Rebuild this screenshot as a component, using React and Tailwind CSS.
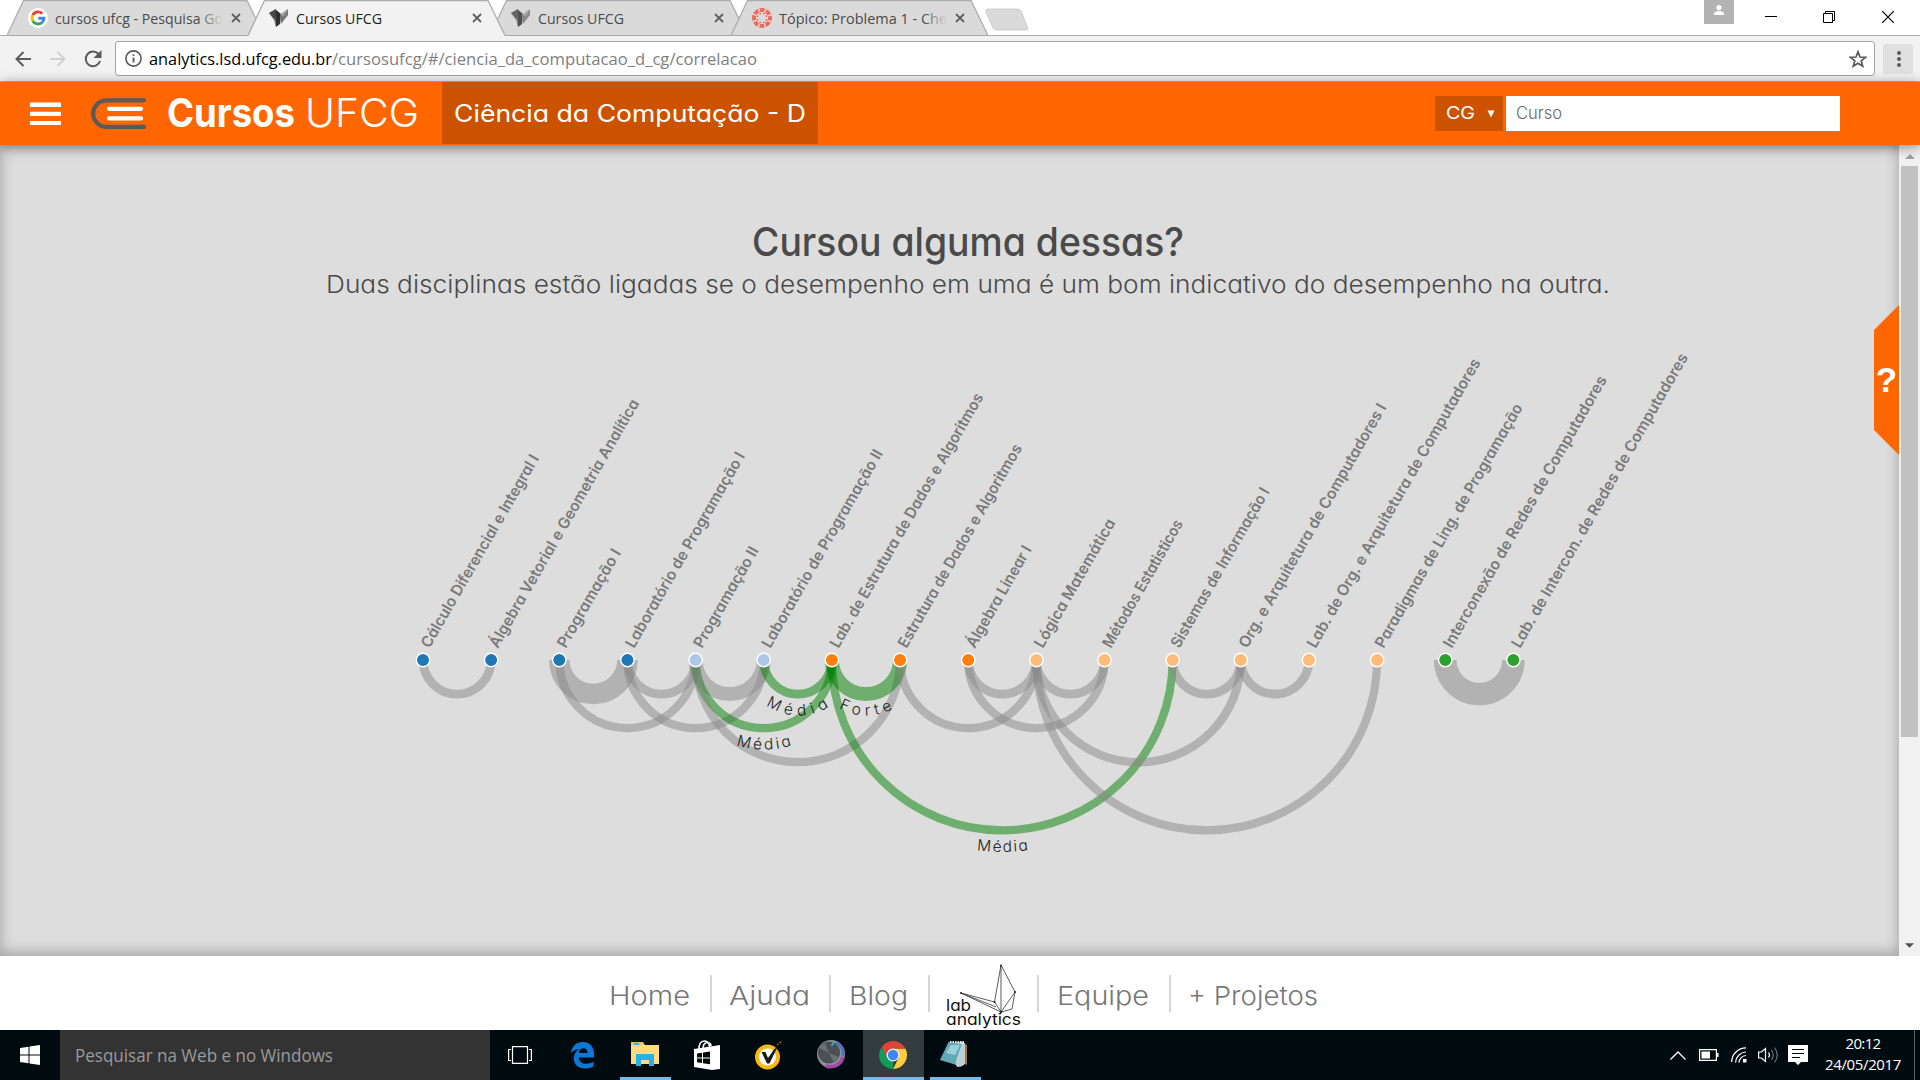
import React, { useLayoutEffect, useRef } from "react";

/* Text whose tracking is adjusted so that it fills the given width. */
function Fit({ w, className = "", children }) {
  const ref = useRef(null);
  useLayoutEffect(() => {
    const el = ref.current;
    el.style.letterSpacing = "0px";
    const natural = el.getBoundingClientRect().width;
    const n = el.textContent.length;
    el.style.letterSpacing = (w - natural) / n + "px";
  }, [w]);
  return (
    <span ref={ref} className={"inline-block shrink-0 whitespace-nowrap " + className}>
      {children}
    </span>
  );
}

/* Text whose glyphs are widened or narrowed to fill the given width. */
function Stretch({ w, className = "", children }) {
  const ref = useRef(null);
  useLayoutEffect(() => {
    const el = ref.current;
    el.style.transform = "none";
    el.style.transform = `scaleX(${w / el.getBoundingClientRect().width})`;
  }, [w]);
  return (
    <span className={"inline-block shrink-0 " + className} style={{ width: w }}>
      <span ref={ref} className="inline-block origin-left whitespace-nowrap">
        {children}
      </span>
    </span>
  );
}

const GOTHIC = "font-['Inter'] [font-feature-settings:'cv11','ss03']";

function Bird() {
  return (
    <svg width="20" height="20" viewBox="0 0 20 20" className="shrink-0">
      <path d="M0 5 7 1 8 13 7 19 5 12Z" fill="#8a8a8a" />
      <path d="M6 1 12 6 11 16 7 19Z" fill="#2e2e2e" />
      <path d="M0 5 7 1 6 12Z" fill="#4a4a4a" />
      <path d="M11 7 19 1 19 7 12 16Z" fill="#777" />
      <path d="M11 7 19 1 15 8Z" fill="#a2a2a2" />
    </svg>
  );
}

function GoogleIcon() {
  return (
    <svg width="20" height="20" viewBox="0 0 20 20" className="shrink-0">
      <circle cx="10" cy="10" r="10" fill="#fff" />
      <g fill="none" strokeWidth="2.9">
        <path d="M14.3 5.7A6 6 0 0 0 4.7 7.2" stroke="#ea4335" />
        <path d="M4.7 7.2A6 6 0 0 0 4.7 12.8" stroke="#fbbc05" />
        <path d="M4.7 12.8A6 6 0 0 0 13.9 14.6" stroke="#34a853" />
        <path d="M13.9 14.6A6 6 0 0 0 16 10.3H10.3" stroke="#4285f4" />
      </g>
    </svg>
  );
}

function CanvasIcon() {
  return (
    <svg width="20" height="20" viewBox="0 0 20 20" className="shrink-0">
      <circle cx="10" cy="10" r="8" fill="none" stroke="#ef6a5e" strokeWidth="4" strokeDasharray="4.8 1.483" strokeDashoffset="2.4" />
      {[0, 45, 90, 135, 180, 225, 270, 315].map((a) => (
        <circle key={a} cx="10" cy="5.2" r="0.9" fill="#ef6a5e" transform={`rotate(${a + 22.5} 10 10)`} />
      ))}
    </svg>
  );
}

function Tab({ active, icon, title, w, fade }) {
  return (
    <div className={"relative -mr-[15.600px] flex h-[36px] w-[257px] shrink-0 items-center " + (active ? "z-10" : "")}>
      <svg className="absolute inset-0" width="257" height="36" viewBox="0 0 257 36">
        <path d="M0 36 16.5.5H240L257 36Z" fill={active ? "#f2f2f2" : "#dadada"} />
        <path d="M0 35.5 16.5.5H240L257 35.5" fill="none" stroke="#adadad" strokeWidth="1.3" />
        {!active && <path d="M0 35.5H257" stroke="#a6a6a6" />}
      </svg>
      <div className="relative flex w-full items-center">
        <div className="ml-[21px]">{icon}</div>
        <div className={"relative ml-[7px] w-[172px] overflow-hidden font-['Open_Sans'] text-[15px] leading-[20px] " + (active ? "text-[#1c1c1c]" : "text-[#4a4a4a]")}>
          <Stretch w={w}>{title}</Stretch>
          {fade && <span className="absolute top-0 right-[4px] h-full w-[24px] bg-linear-to-r from-transparent to-[#dadada]" />}
        </div>
        <svg width="10" height="10" viewBox="0 0 10 10" className="ml-[4px]">
          <path d="M1 1 9 9M9 1 1 9" stroke="#5f5f5f" strokeWidth="1.8" />
        </svg>
      </div>
    </div>
  );
}

function TabStrip() {
  return (
    <div className="flex h-[36px] items-start border-b border-[#adadad] bg-white">
      <div className="flex pl-[7px]">
        <Tab icon={<GoogleIcon />} title="cursos ufcg - Pesquisa Go" w={168} fade />
        <Tab active icon={<Bird />} title="Cursos UFCG" w={86} />
        <Tab icon={<span className="opacity-80"><Bird /></span>} title="Cursos UFCG" w={86} />
        <Tab icon={<CanvasIcon />} title="Tópico: Problema 1 - Che" w={168} fade />
      </div>
      <svg width="44" height="24" viewBox="0 0 44 24" className="mt-[8px] ml-[12px]">
        <path d="M3 1H32Q35 1 36 3L42.5 19Q43.5 22 41 22H12Q9 22 8 20L1 4Q0 1 3 1Z" fill="#dadada" stroke="#c6c6c6" strokeWidth=".8" />
      </svg>
      <div className="ml-auto flex items-start">
        <div className="flex h-[24px] w-[30px] justify-center bg-[#b3b3b3] pt-[5px]">
          <svg width="10" height="10" viewBox="0 0 10 10"><circle cx="5" cy="2.6" r="2.6" fill="#fff" /><path d="M0 10V8.5Q1 6 5 6T10 8.5V10Z" fill="#fff" /></svg>
        </div>
        <svg width="12" height="12" viewBox="0 0 12 12" className="mt-[11px] ml-[31px]"><path d="M0 5.5H12" stroke="#000" /></svg>
        <svg width="12" height="12" viewBox="0 0 12 12" className="mt-[11px] ml-[46px]" fill="none" stroke="#000"><path d="M.5 2.5H9.5V11.5H.5ZM2.5 2.5V.5H11.5V9.5H9.5" /></svg>
        <svg width="12" height="12" viewBox="0 0 12 12" className="mt-[11px] mr-[26px] ml-[47px]"><path d="M0 0 12 12M12 0 0 12" stroke="#000" strokeWidth="1.2" /></svg>
      </div>
    </div>
  );
}

function Toolbar() {
  return (
    <div className="flex h-[46px] items-center border-b border-[#b5b5b5] bg-[#f2f2f2]">
      <svg width="16" height="16" viewBox="0 0 16 16" className="ml-[15px]" fill="none" stroke="#5a5a5a" strokeWidth="2"><path d="M16 8H1.5M8.5 1 1.5 8l7 7" /></svg>
      <svg width="16" height="16" viewBox="0 0 16 16" className="ml-[19px]" fill="none" stroke="#d0d0d0" strokeWidth="2"><path d="M0 8H14.5M7.5 1l7 7-7 7" /></svg>
      <svg width="18" height="18" viewBox="0 0 18 18" className="ml-[18px]"><path d="M14.5 4A7.3 7.3 0 1 0 16 11" fill="none" stroke="#5a5a5a" strokeWidth="2" /><path d="M17.5 0V8H9.5Z" fill="#5a5a5a" /></svg>
      <div className="ml-[13px] flex h-[35px] w-[1760px] items-center rounded-[3px] border border-[#a6a6a6] bg-white pl-[9px]">
        <svg width="17" height="17" viewBox="0 0 17 17"><circle cx="8.5" cy="8.5" r="7.6" fill="none" stroke="#5a5a5a" strokeWidth="1.6" /><path d="M8.5 7.5V12.5M8.5 4.3V6" stroke="#5a5a5a" strokeWidth="1.8" /></svg>
        <div className="ml-[7px] flex font-['Open_Sans'] text-[17px] leading-[24px]">
          <Stretch w={183} className="text-black">analytics.lsd.ufcg.edu.br</Stretch>
          <Stretch w={425} className="text-[#808080]">/cursosufcg/#/ciencia_da_computacao_d_cg/correlacao</Stretch>
        </div>
        <svg width="18" height="18" viewBox="0 0 18 18" className="mr-[7px] ml-auto"><path d="M9 1.8 11 7l5.5.3-4.3 3.5 1.5 5.4L9 13.2l-4.7 3 1.5-5.4L1.5 7.3 7 7Z" fill="none" stroke="#5a5a5a" strokeWidth="1.7" /></svg>
      </div>
      <div className="ml-[8px] flex h-[30px] w-[30px] items-center justify-center rounded-[2px] bg-[#e0e0e0]">
        <svg width="4" height="18" viewBox="0 0 4 18" className="ml-[2px]" fill="#5a5a5a"><circle cx="2" cy="3" r="2" /><circle cx="2" cy="9" r="2" /><circle cx="2" cy="15" r="2" /></svg>
      </div>
    </div>
  );
}

function Header() {
  return (
    <header className={"relative z-20 flex h-[63px] bg-[#ff6600] text-white shadow-[0_2px_12px_rgba(0,0,0,0.45)] " + GOTHIC}>
      <svg width="31" height="23" viewBox="0 0 31 23" className="mt-[20px] ml-[30px]" fill="#fff"><path d="M0 .5H31V5H0ZM0 9.7H31V14H0ZM0 19H31V23H0Z" /></svg>
      <svg width="56" height="32" viewBox="0 0 56 32" className="mt-[16px] ml-[30px]" fill="none" strokeLinecap="round" strokeWidth="4.2">
        <path d="M53 2.3H15.5a13.3 13.3 0 0 0 0 26.6H53" stroke="#5a5a5a" />
        <path d="M18 10.8H50M18 20.4H50" stroke="#fff" />
      </svg>
      <div className="ml-[20px] flex h-[61px] w-[255px] items-center text-[40px] leading-none">
        <Stretch w={128} className="font-bold">Cursos</Stretch>
        <Stretch w={114} className="ml-[10px] font-light">UFCG</Stretch>
      </div>
      <div className="ml-[20px] flex h-[62px] w-[376px] items-center bg-[#cc5200] pt-[2px] pl-[12px] text-[24px]">
        <Stretch w={352}>Ciência da Computação - D</Stretch>
      </div>
      <div className="mt-[14px] ml-auto flex h-[35px] w-[68px] items-center bg-[#cc5200] pl-[11px] text-[17px]">
        <Stretch w={29}>CG</Stretch>
        <svg width="8" height="8" viewBox="0 0 8 8" className="ml-[12px]"><path d="M.5.5H7.5L4 7.5Z" fill="#fff" /></svg>
      </div>
      <div className="mt-[14px] mr-[80px] ml-[3px] flex h-[35px] w-[334px] items-center bg-white pl-[10px] text-[17px] font-light text-[#666]">
        <Stretch w={46}>Curso</Stretch>
      </div>
    </header>
  );
}

const NODES = [
  ["Cálculo Diferencial e Integral I", "#1f77b4", 220],
  ["Álgebra Vetorial e Geometria Analítica", "#1f77b4", 284],
  ["Programação I", "#1f77b4", 111],
  ["Laboratório de Programação I", "#1f77b4", 223],
  ["Programação II", "#aec7e8", 114],
  ["Laboratório de Programação II", "#aec7e8", 226],
  ["Lab. de Estrutura de Dados e Algoritmos", "#ff7f0e", 291],
  ["Estrutura de Dados e Algoritmos", "#ff7f0e", 232],
  ["Álgebra Linear I", "#ff7f0e", 115],
  ["Lógica Matemática", "#ffbb78", 146],
  ["Métodos Estatisticos", "#ffbb78", 145],
  ["Sistemas de Informação I", "#ffbb78", 182],
  ["Org. e Arquitetura de Computadores I", "#ffbb78", 279],
  ["Lab. de Org. e Arquitetura de Computadores", "#ffbb78", 331],
  ["Paradigmas de Ling. de Programação", "#ffbb78", 279],
  ["Interconexão de Redes de Computadores", "#2ca02c", 311],
  ["Lab. de Intercon. de Redes de Computadores", "#2ca02c", 337],
];

const LINKS = [
  [0, 1, 8.8], [2, 3, 20.5], [2, 4, 8.4], [3, 4, 8.8], [3, 5, 8.4], [4, 5, 14],
  [4, 6, 8.4, "Média", 2.8], [4, 7, 8.2], [5, 6, 8.8, "Média", 5.4], [6, 7, 14, "Forte", 4.8],
  [6, 11, 8.2, "Média", 1.6], [7, 9, 8.4], [8, 9, 8.8], [8, 10, 8.4], [9, 10, 8.8],
  [9, 12, 8.4], [9, 14, 8.2], [11, 12, 8.8], [12, 13, 8.8], [15, 16, 22.5],
];

const nodeX = (i) => 423 + 68.15 * i;
const BASE = 335;

function ArcDiagram() {
  return (
    <svg width="1899" height="560" viewBox="0 0 1899 560" className={"block " + GOTHIC}>
      {LINKS.map(([a, b, sw, label]) => {
        const r = (nodeX(b) - nodeX(a)) / 2;
        return (
          <path
            key={a + "-" + b}
            d={`M${nodeX(a)} ${BASE}A${r} ${r} 0 0 0 ${nodeX(b)} ${BASE}`}
            fill="none"
            stroke={label ? "#008000" : "#888"}
            strokeOpacity="0.5"
            strokeWidth={sw}
          />
        );
      })}
      {LINKS.filter((l) => l[3]).map(([a, b, , label, gap]) => {
        const r = (nodeX(b) - nodeX(a)) / 2 + 21;
        const c = (nodeX(b) + nodeX(a)) / 2 + 1;
        return (
          <g key={"t" + a + b}>
            <path id={`arc-${a}-${b}`} d={`M${c - r} ${BASE + 0.5}A${r} ${r} 0 0 0 ${c + r} ${BASE + 0.5}`} fill="none" />
            <text fontSize="15.5" fill="#222" fontWeight="300" letterSpacing={gap} textAnchor="middle">
              <textPath href={`#arc-${a}-${b}`} startOffset={(Math.PI * r) / 2 + (b - a > 2 ? 0 : b - a > 1 ? 0.5 : 1)}>{label}</textPath>
            </text>
          </g>
        );
      })}
      {NODES.map(([name, color, len], i) => (
        <g key={name}>
          <circle cx={nodeX(i)} cy={BASE} r="6.7" fill={color} stroke="#fff" strokeWidth="1.4" />
          <text
            transform={`translate(${nodeX(i) + 6.5} ${BASE - 11}) rotate(-60)`}
            fontSize="15.5"
            fontWeight="600"
            fill="#7a7a7a"
            textLength={len}
            lengthAdjust="spacingAndGlyphs"
          >
            {name}
          </text>
        </g>
      ))}
    </svg>
  );
}

function Content() {
  return (
    <div className="flex h-[811px]">
      <main className="relative w-[1899px] bg-[#ddd] shadow-[inset_0_-3px_14px_rgba(0,0,0,0.28)]">
        <div className={"flex flex-col items-center pt-[69px] pl-[37px] text-[#4a4a4a] " + GOTHIC}>
          <h1 className="h-[56px] text-[40px] leading-[56px] font-medium"><Stretch w={432}>Cursou alguma dessas?</Stretch></h1>
          <p className="h-[30px] text-[24px] leading-[30px] font-light"><Stretch w={1284}>Duas disciplinas estão ligadas se o desempenho em uma é um bom indicativo do desempenho na outra.</Stretch></p>
        </div>
        <div className="mt-[25px]"><ArcDiagram /></div>
        <div className="absolute top-[160px] right-0 flex h-[150px] w-[25px] items-center justify-center bg-[#ff6600] font-['Liberation_Sans'] text-[35px] font-bold text-white [clip-path:polygon(0_25px,100%_0,100%_100%,0_125px)]">?</div>
      </main>
      <div className="flex w-[21px] flex-col items-center bg-[#f1f1f1]">
        <svg width="10" height="5" viewBox="0 0 10 5" className="mt-[9px]"><path d="M5 0 10 5H0Z" fill="#a3a3a3" /></svg>
        <div className="mt-[7px] h-[571px] w-[17px] bg-[#c1c1c1]" />
        <svg width="9" height="5" viewBox="0 0 10 5" className="mt-auto mb-[8px]"><path d="M5 5 10 0H0Z" fill="#505050" /></svg>
      </div>
    </div>
  );
}

function Separator({ className }) {
  return <span className={"mb-[3px] h-[37px] w-[2px] bg-[#d6d6d6] " + className} />;
}

function Footer() {
  return (
    <footer className={"flex h-[74px] items-center bg-white pt-[4px] pl-[609px] text-[26px] font-light text-[#777] " + GOTHIC}>
      <Stretch w={81}>Home</Stretch>
      <Separator className="ml-[20px]" />
      <Stretch w={81} className="ml-[17px]">Ajuda</Stretch>
      <Separator className="ml-[19px]" />
      <Stretch w={59} className="ml-[18px]">Blog</Stretch>
      <Separator className="ml-[20px]" />
      <svg width="80" height="66" viewBox="0 0 80 66" className="mt-[3px] ml-[16px]">
        <g fill="none" stroke="#333" strokeWidth=".8">
          <path d="M55 1 48.5 38 55 48 66 45 69 28 55 1 55 48 69 28" />
          <path d="M15 29 48.5 38M15 29 55 48M15 29 50 43" />
        </g>
        <g fill="#222"><circle cx="55" cy="1.5" r="1" /><circle cx="69" cy="28" r="1" /><circle cx="15" cy="29" r="1" /><circle cx="48.5" cy="38" r="1" /><circle cx="55" cy="48" r="1.2" /></g>
        <g fill="#111" fontSize="16" fontWeight="400">
          <text x="0" y="46.5" textLength="25" lengthAdjust="spacingAndGlyphs">lab</text>
          <text x="0" y="60.5" textLength="75" lengthAdjust="spacingAndGlyphs">analytics</text>
        </g>
      </svg>
      <Separator className="ml-[11px]" />
      <Stretch w={92} className="ml-[18px]">Equipe</Stretch>
      <Separator className="ml-[20px]" />
      <Stretch w={130} className="ml-[17px]">+ Projetos</Stretch>
    </footer>
  );
}

function TaskButton({ className = "", children }) {
  return <div className={"flex h-[50px] shrink-0 items-center justify-center border-b-[3px] " + className}>{children}</div>;
}

function Taskbar() {
  return (
    <div className="flex h-[50px] bg-[#000b0f] font-['Open_Sans'] text-white">
      <div className="flex w-[60px] items-center justify-center">
        <svg width="20" height="20" viewBox="0 0 20 20" fill="#fff"><path d="M0 3 8.5 1.7V9.5H0ZM9.5 1.5 20 0V9.5H9.5ZM0 10.5H8.5V18.3L0 17ZM9.5 10.5H20V20L9.5 18.5Z" /></svg>
      </div>
      <div className="flex w-[430px] items-center bg-[#333] pt-[1px] pl-[15px] text-[18px] text-[#9a9a9a]"><Stretch w={258}>Pesquisar na Web e no Windows</Stretch></div>
      <TaskButton className="ml-[8px] w-[44px] border-transparent pt-[3px]">
        <svg width="24" height="18" viewBox="0 0 24 18" fill="none" stroke="#fff" strokeWidth="1.2"><path d="M4.5.6H19.5V17.4H4.5ZM3 3.5H.6V14.5H3M21 3.5H23.4V14.5H21" /></svg>
      </TaskButton>
      <TaskButton className="ml-[15px] w-[52px] border-transparent pt-[2px]">
        <svg width="25" height="28" viewBox="0 0 26 28" className="mr-[2px]"><path d="M1 12C2 4.5 7 .5 13.5.5 20.5.5 25 5.5 25 12.5V16.5H9C9.5 21 13 23 17 23 20 23 22.5 22 24.5 21V26C22 27.3 19 28 15.5 28 8.5 28 4 24 4 17.5 4 13 6.5 9.5 10 7.8 6 8 3 9.8 1 12ZM9.2 11.8H18.2C18.2 9 16.8 7 14 7 11.3 7 9.6 9 9.2 11.8Z" fill="#0a78d8" /></svg>
      </TaskButton>
      <TaskButton className="ml-[11px] w-[51px] border-[#76b9ed]">
        <svg width="28" height="24" viewBox="0 0 28 24" className="mr-[2px]"><path d="M0 0H12L14 3H28V22H0Z" fill="#f0c557" /><path d="M0 3H28V22H0Z" fill="#fbdc82" /><path d="M3 .8H8V3H3Z" fill="#3fb2e8" /><path d="M5 12H23V24H18V18H10V24H5Z" fill="#22b3ea" /></svg>
      </TaskButton>
      <TaskButton className="ml-[10px] w-[52px] border-transparent pt-[2px]">
        <svg width="26" height="30" viewBox="0 0 26 30"><path d="M5 10V7Q6 1 10.5 1 15 1 15.5 7M9 9Q9 2.5 13.5 2.5 17 3 17 6" fill="none" stroke="#fff" strokeWidth="1.6" /><path d="M0 9 26 5V29L18 30 0 27Z" fill="#fff" /><path d="M3 13.5 8 12.8V17.5H3ZM9 12.6 16 11.5V17.5H9ZM3 18.5H8V23L3 22.3ZM9 18.5H16V24.2L9 23.2Z" fill="#02090c" /></svg>
      </TaskButton>
      <TaskButton className="ml-[10px] w-[52px] border-transparent pt-[2px]">
        <svg width="30" height="30" viewBox="0 0 30 30"><circle cx="13.5" cy="17" r="10.5" fill="#fff" stroke="#fdb813" strokeWidth="4" /><path d="M7.5 12H11.5L14 18 20 9.5 24 6 15.5 23.5H13Z" fill="#1a1a1a" /><path d="M23 5 28 1" stroke="#8d6a17" strokeWidth="1.4" strokeDasharray="2 1" /></svg>
      </TaskButton>
      <TaskButton className="ml-[10px] w-[52px] border-transparent pt-[1px]">
        <svg width="30" height="30" viewBox="0 0 30 30"><circle cx="15" cy="15" r="14" fill="#8b9196" /><path d="M20 3A13 13 0 0 1 27 17" fill="none" stroke="#4b72c4" strokeWidth="3" /><path d="M27 18A13 13 0 0 1 10 27" fill="none" stroke="#a542ad" strokeWidth="3.5" /><circle cx="13" cy="13.5" r="11" fill="#4a5054" /><path d="M13 14 3 9A11 11 0 0 1 9 4ZM13 14 23 18A11 11 0 0 1 18 24Z" fill="#687075" /><path d="M15.5 7 18 2.5" stroke="#35bce0" strokeWidth="1.5" /></svg>
      </TaskButton>
      <TaskButton className="ml-[6px] w-[61px] border-[#76b9ed] bg-[#333d40] pt-[2px]">
        <svg width="28" height="28" viewBox="0 0 28 28" className="mr-[2px]"><path d="M14 14V28A14 14 0 0 1 1.9 7Z" fill="#0f9d58" /><path d="M14 7.5H26.4A14 14 0 0 1 14 28L19.6 17Z" fill="#ffcd40" /><path d="M14 7.5H26.4A14 14 0 0 0 2.5 6L8.4 17Z" fill="#db4437" /><circle cx="14" cy="14" r="6.5" fill="#f1f1f1" /><circle cx="14" cy="14" r="5.2" fill="#4285f4" /></svg>
      </TaskButton>
      <TaskButton className="ml-[6px] w-[51px] border-[#76b9ed]">
        <svg width="28" height="28" viewBox="0 0 28 28" className="mr-[3px]"><path d="M23 3 27 5V25L23 23Z" fill="#a87532" /><path d="M9 3 24 2V25L17 27Z" fill="#d9e6e8" /><path d="M8.5 2 22 4 15 24.5 0 20Z" fill="#62a9b8" /><path d="M11 5 20 5 15 15 6 13Z" fill="#9ed0da" /><path d="M22 4 15 24.5 20 27 25 24 25 3Z" fill="#bccfd3" /><path d="M10 2H24" stroke="#e9e9e9" strokeWidth="2" strokeDasharray="1.5 1" /></svg>
      </TaskButton>
      <div className="ml-auto flex items-center">
        <svg width="16" height="9" viewBox="0 0 16 9" fill="none" stroke="#fff" strokeWidth="1.3"><path d="M.5 8.5 8 1 15.5 8.5" /></svg>
        <svg width="20" height="12" viewBox="0 0 20 12" className="ml-[13px]"><path d="M.6.6H17.4V11.4H.6Z" fill="none" stroke="#fff" strokeWidth="1.2" /><path d="M2.5 2.5H11V9.5H2.5ZM18 4H19.5V8H18Z" fill="#fff" /></svg>
        <svg width="16" height="16" viewBox="0 0 16 16" className="ml-[12px]" fill="none" stroke="#fff" strokeWidth="1.2"><path d="M.6 15A14.5 14.5 0 0 1 15 .8M4.5 15.5A11 11 0 0 1 15 5M8 15.5A7.5 7.5 0 0 1 15 8.5" /><path d="M12 12H15.5V15.5H12Z" fill="#fff" stroke="none" /></svg>
        <svg width="21" height="18" viewBox="0 0 21 18" className="ml-[11px]" fill="none" stroke="#fff" strokeWidth="1.2"><path d="M.6 6H3.5L7.5 2.5V15.5L3.5 12H.6Z" /><path d="M10.5 6.5Q12.5 9 10.5 11.5" /><path d="M13.5 4Q17 9 13.5 14M16.5 1.5Q22 9 16.5 16.5" stroke="#66747a" /></svg>
        <svg width="20" height="20" viewBox="0 0 20 20" className="ml-[9px]"><path d="M0 0H20V17H13L10 20 7 17H0Z" fill="#fff" /><path d="M4 4.5H16M4 8.5H16M4 12.5H12" stroke="#02090c" strokeWidth="1.2" /></svg>
        <div className="-mt-[3px] ml-[16px] flex w-[78px] flex-col items-center text-[15px] leading-[21px]"><Fit w={35}>20:12</Fit><Fit w={76}>24/05/2017</Fit></div>
        <div className="ml-[12px] h-[50px] w-px bg-[#5c6669]" />
        <div className="w-[5px]" />
      </div>
    </div>
  );
}

export default function App() {
  return (
    <div className="h-[1080px] w-[1920px] overflow-hidden bg-white">
      <TabStrip />
      <Toolbar />
      <Header />
      <Content />
      <Footer />
      <Taskbar />
    </div>
  );
}
